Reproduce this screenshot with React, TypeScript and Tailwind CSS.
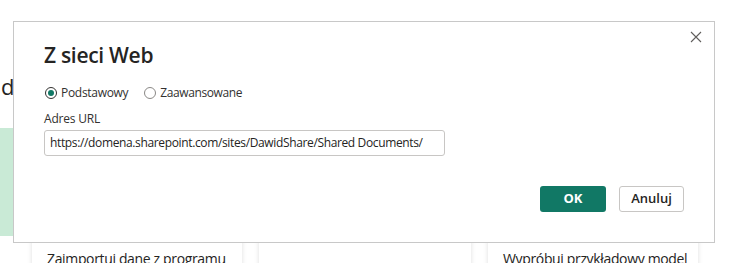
export default function App() {
  const font = { fontFamily: '"Open Sans", "Noto Sans", sans-serif' };
  return (
    <div className="relative w-[756px] h-[263px] overflow-hidden bg-white text-[#252423]" style={font}>
      {/* background page */}
      <div className="flex flex-col">
        <div className="h-[72px]" />
        <div className="h-[28px] text-[22px] leading-[28px] pl-[1px]">d</div>
        <div className="h-[28px]" />
        <div className="w-[13px] h-[108px] bg-[#c9ead6]" />
        <div className="flex gap-[17px] pl-[32px] mt-[4px]">
          <div className="w-[210px] h-[80px] bg-white shadow-[0_0_5px_rgba(0,0,0,0.13)] pl-[15px] pt-[9px] text-[14px] leading-[20px] tracking-[-0.35px] whitespace-nowrap">
            Zaimportuj dane z programu
          </div>
          <div className="w-[212px] h-[80px] bg-white shadow-[0_0_5px_rgba(0,0,0,0.13)]" />
          <div className="w-[210px] h-[80px] bg-white shadow-[0_0_5px_rgba(0,0,0,0.13)] pl-[15px] pt-[9px] text-[14px] leading-[20px] tracking-[-0.35px] whitespace-nowrap">
            Wypróbuj przykładowy model
          </div>
        </div>
      </div>

      {/* dialog */}
      <div className="absolute left-[13px] top-[21px] w-[702px] h-[222px] border border-[#c8c8c8] bg-white flex flex-col pl-[30px] pr-[30px] pt-[19px]">
        <button className="absolute top-[8px] right-[11px] w-[14px] h-[14px] flex items-center justify-center">
          <svg width="12" height="12" viewBox="0 0 12 12">
            <path d="M1 1 L11 11 M11 1 L1 11" stroke="#605e5c" strokeWidth="1.1" fill="none" />
          </svg>
        </button>
        <div className="text-[21px] leading-[28px] font-semibold tracking-[-0.3px]">Z sieci Web</div>
        <div className="flex items-center mt-[16px] h-[16px] text-[12px] leading-[16px] text-[#323130]">
          <span className="w-[12px] h-[12px] rounded-full border border-[#323130] flex items-center justify-center ml-[1px]">
            <span className="w-[6px] h-[6px] rounded-full bg-[#117865]" />
          </span>
          <span className="ml-[4px] tracking-[-0.3px]">Podstawowy</span>
          <span className="w-[12px] h-[12px] rounded-full border border-[#8a8886] ml-[16px]" />
          <span className="ml-[4px] tracking-[-0.4px]">Zaawansowane</span>
        </div>
        <div className="mt-[10px] text-[12px] leading-[16px] text-[#323130] tracking-[-0.2px]">Adres URL</div>
        <div className="mt-[3px] w-[401px] h-[26px] border border-[#c8c6c4] rounded-[3px] flex items-center pl-[5px] text-[12px] text-[#252423] tracking-[-0.36px] whitespace-nowrap overflow-hidden">
          https://domena.sharepoint.com/sites/DawidShare/Shared Documents/
        </div>
        <div className="flex justify-end gap-[13px] mt-[30px]">
          <button className="w-[66px] h-[26px] rounded-[3px] bg-[#117865] text-white text-[13px] font-bold flex items-center justify-center">
            OK
          </button>
          <button className="w-[65px] h-[26px] rounded-[3px] border border-[#c8c6c4] bg-white text-[#252423] text-[13px] font-semibold flex items-center justify-center">
            Anuluj
          </button>
        </div>
      </div>
    </div>
  );
}
